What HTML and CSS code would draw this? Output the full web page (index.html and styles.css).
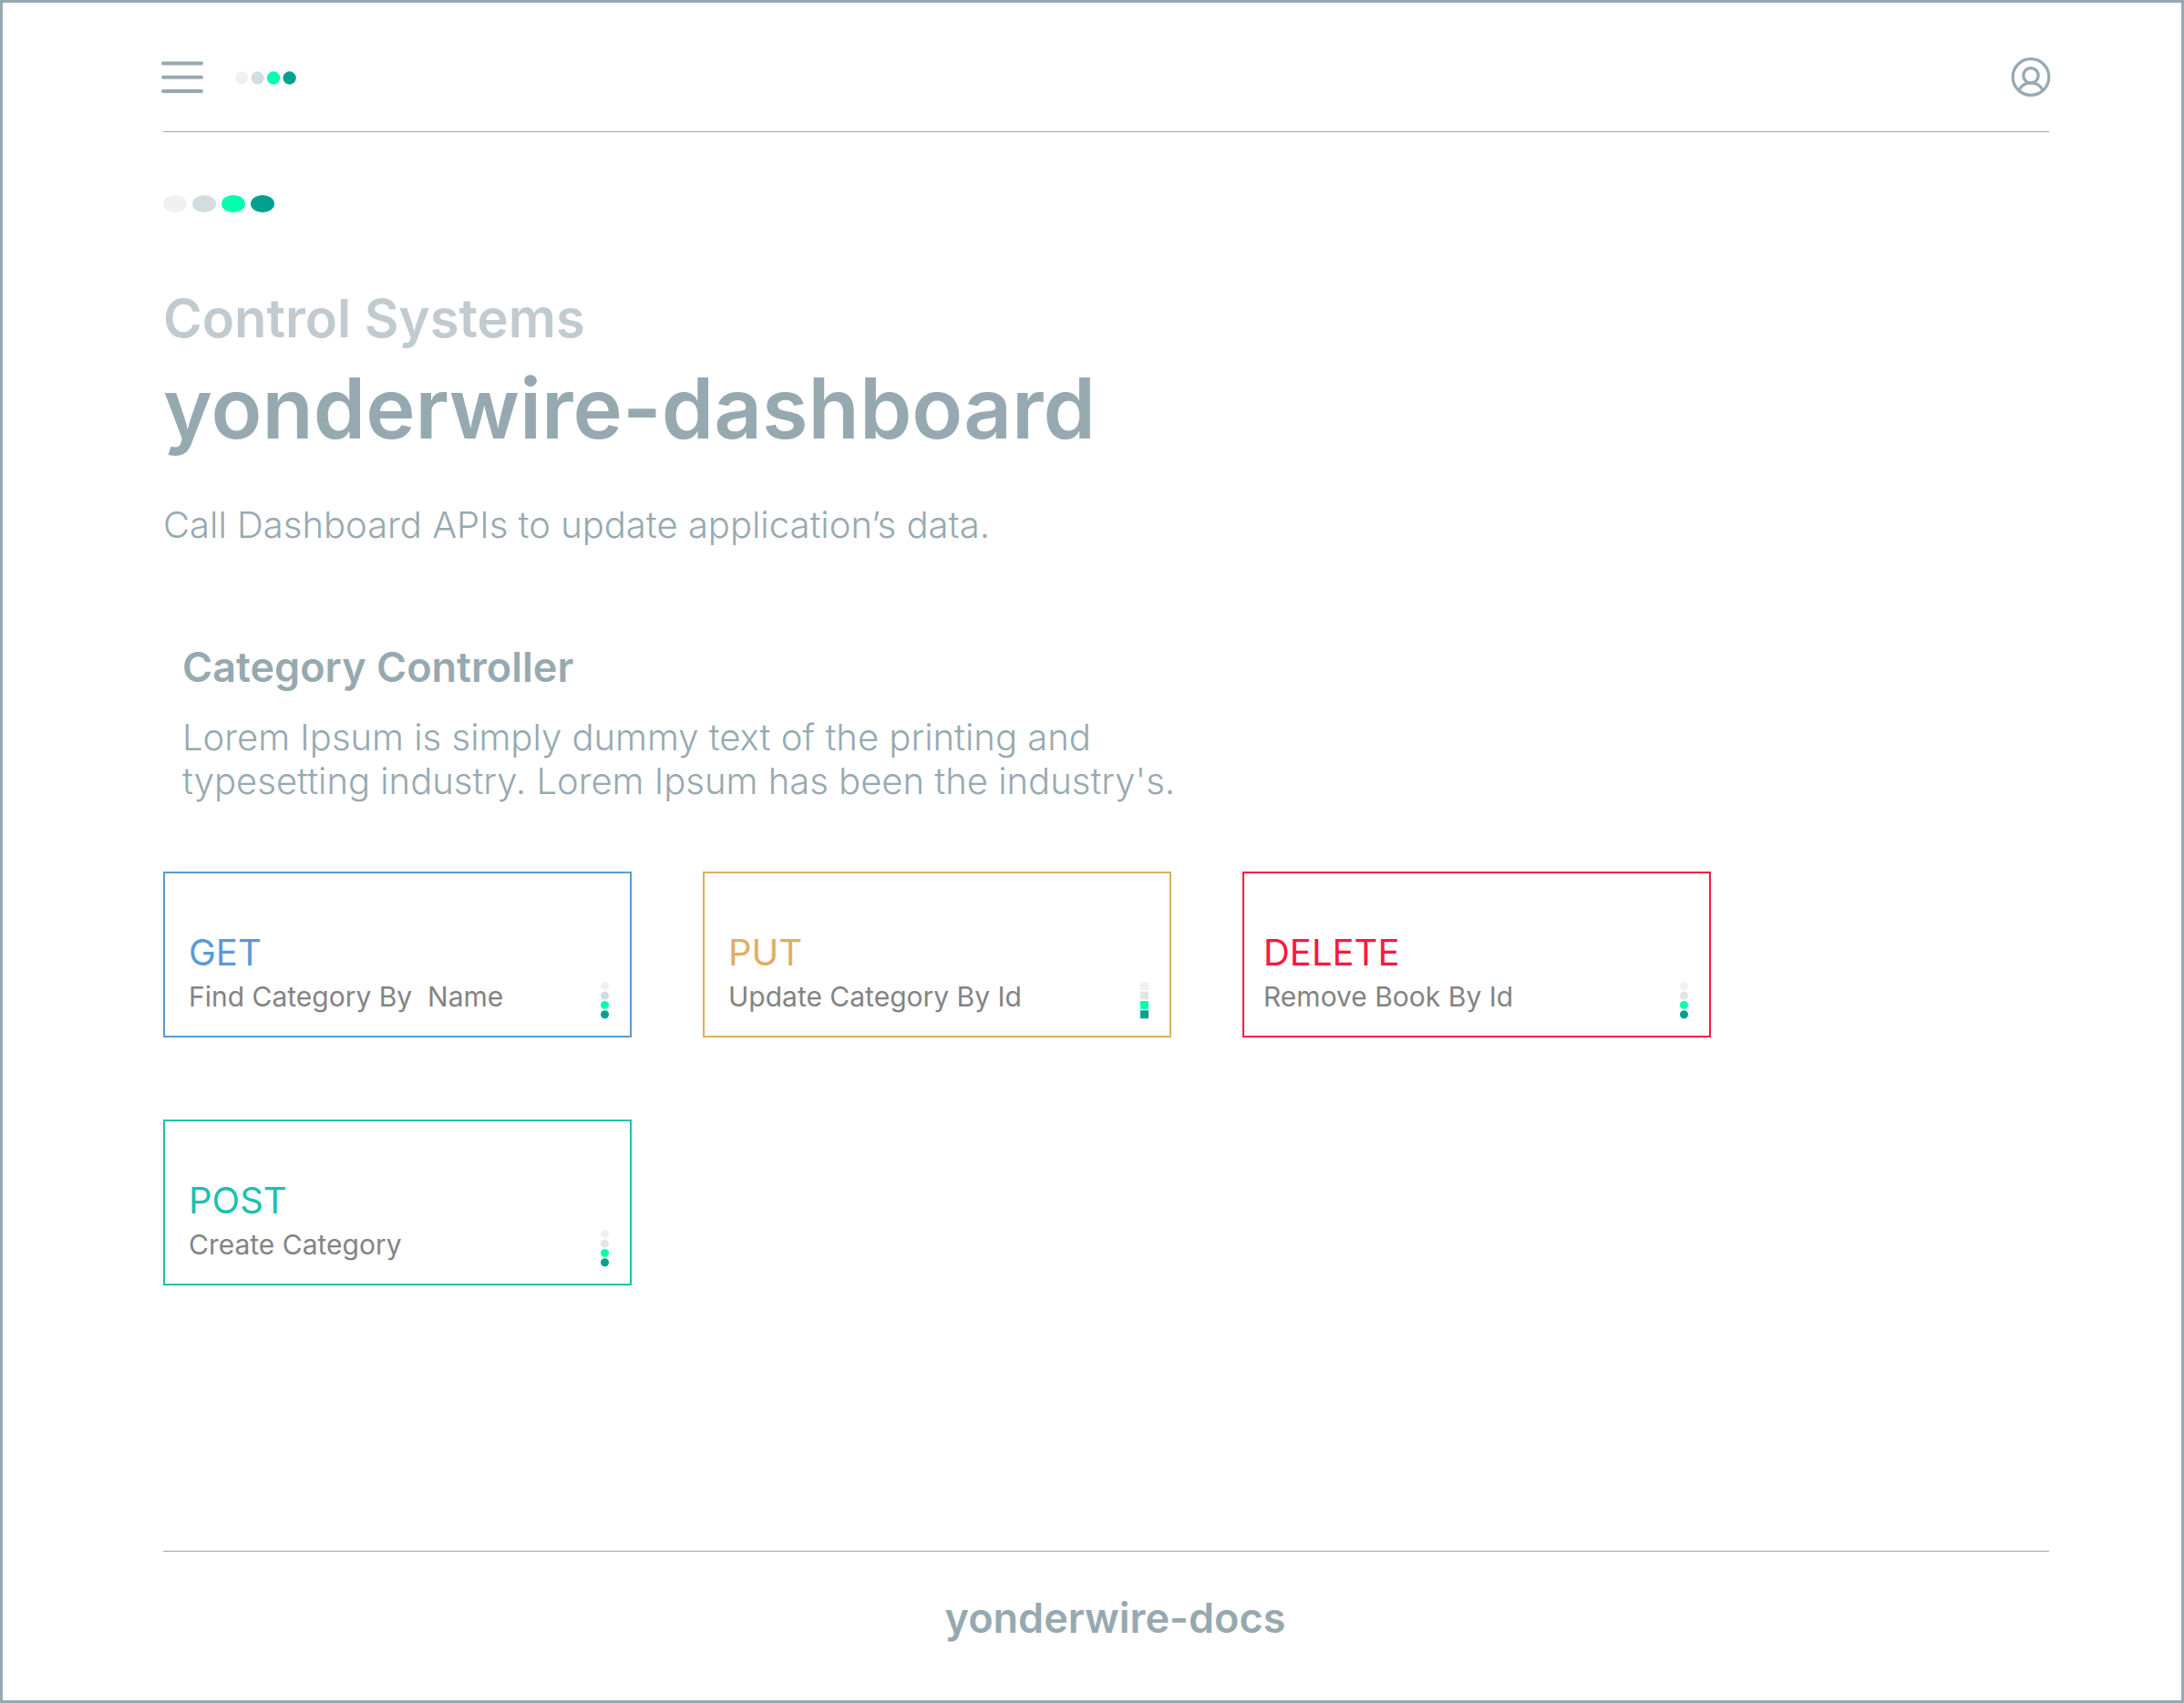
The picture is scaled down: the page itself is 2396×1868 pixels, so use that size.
FILE: index.html
```html
<!DOCTYPE html>
<html lang="en">
<head>
  <meta charset="utf-8">
  <meta name="viewport" content="width=device-width, initial-scale=1">
  <title>yonderwire-dashboard</title>
  <link rel="stylesheet" href="styles.css">
</head>
<body>
  <div class="page">
    <header class="topbar">
      <button class="icon-button" type="button" aria-label="Open menu">
        <svg width="46" height="36" viewBox="0 0 46 36" fill="none" stroke="currentColor" stroke-width="4" stroke-linecap="round" aria-hidden="true">
          <path d="M2 2.5H44M2 17.8H44M2 33H44"/>
        </svg>
      </button>
      <svg class="mark" width="67" height="15" viewBox="0 0 67 15" aria-hidden="true">
        <circle class="tone-1" cx="7.2" cy="7.5" r="7.2"/>
        <circle class="tone-2" cx="24.6" cy="7.5" r="7.2"/>
        <circle class="tone-3" cx="42.1" cy="7.5" r="7.2"/>
        <circle class="tone-4" cx="59.6" cy="7.5" r="7.2"/>
      </svg>
      <button class="icon-button account" type="button" aria-label="Account">
        <svg width="44" height="44" viewBox="0 0 44 44" fill="none" stroke="currentColor" stroke-width="3.2" aria-hidden="true">
          <circle cx="22" cy="21.5" r="19.8"/>
          <circle cx="22" cy="19.8" r="8.2"/>
          <path d="M8.8 35.9C11.5 31 16.2 27.9 22 27.9S32.5 31 35.2 35.9"/>
        </svg>
      </button>
    </header>

    <main class="content">
      <svg class="brand" width="122" height="19" viewBox="0 0 122 19" aria-hidden="true">
        <ellipse class="tone-1" cx="13" cy="9.5" rx="13" ry="9.5"/>
        <ellipse class="tone-2" cx="45" cy="9.5" rx="13" ry="9.5"/>
        <ellipse class="tone-3" cx="77" cy="9.5" rx="13" ry="9.5"/>
        <ellipse class="tone-4" cx="109" cy="9.5" rx="13" ry="9.5"/>
      </svg>
      <p class="eyebrow">Control Systems</p>
      <h1 class="title">yonderwire-dashboard</h1>
      <p class="lead">Call Dashboard APIs to update application’s data.</p>

      <section>
        <div class="section-intro">
          <h2 class="section-title">Category Controller</h2>
          <p class="lead">Lorem Ipsum is simply dummy text of the printing and typesetting industry. Lorem Ipsum has been the industry's.</p>
        </div>

        <div class="cards">
          <a class="card card-get" href="#get">
            <span class="card-text">
              <span class="method">GET</span>
              <span class="summary">Find Category By  Name</span>
            </span>
            <svg width="9" height="41" viewBox="0 0 9 41" aria-hidden="true">
              <circle class="tone-1" cx="4.5" cy="4.6" r="4.5"/>
              <circle class="tone-2" cx="4.5" cy="15" r="4.5"/>
              <circle class="tone-3" cx="4.5" cy="25.4" r="4.5"/>
              <circle class="tone-4" cx="4.5" cy="35.8" r="4.5"/>
            </svg>
          </a>
          <a class="card card-put" href="#put">
            <span class="card-text">
              <span class="method">PUT</span>
              <span class="summary">Update Category By Id</span>
            </span>
            <svg width="9" height="41" viewBox="0 0 9 41" aria-hidden="true">
              <rect class="tone-1" y="0.2" width="9" height="8.8"/>
              <rect class="tone-neutral" y="10.5" width="9" height="8.8"/>
              <rect class="tone-3" y="21" width="9" height="8.8"/>
              <rect class="tone-4" y="31.3" width="9" height="8.8"/>
            </svg>
          </a>
          <a class="card card-delete" href="#delete">
            <span class="card-text">
              <span class="method">DELETE</span>
              <span class="summary">Remove Book By Id</span>
            </span>
            <svg width="9" height="41" viewBox="0 0 9 41" aria-hidden="true">
              <circle class="tone-1" cx="4.5" cy="4.6" r="4.5"/>
              <circle class="tone-neutral" cx="4.5" cy="15" r="4.5"/>
              <circle class="tone-3" cx="4.5" cy="25.4" r="4.5"/>
              <circle class="tone-4" cx="4.5" cy="35.8" r="4.5"/>
            </svg>
          </a>
          <a class="card card-post" href="#post">
            <span class="card-text">
              <span class="method">POST</span>
              <span class="summary">Create Category</span>
            </span>
            <svg width="9" height="41" viewBox="0 0 9 41" aria-hidden="true">
              <circle class="tone-1" cx="4.5" cy="4.6" r="4.5"/>
              <circle class="tone-neutral" cx="4.5" cy="15" r="4.5"/>
              <circle class="tone-3" cx="4.5" cy="25.4" r="4.5"/>
              <circle class="tone-4" cx="4.5" cy="35.8" r="4.5"/>
            </svg>
          </a>
        </div>
      </section>
    </main>

    <footer class="footer">
      <a class="footer-link" href="#docs">yonderwire-docs</a>
    </footer>
  </div>
</body>
</html>
```
FILE: styles.css
```css
:root {
  --slate: #97a9b0;
  --slate-light: #c1cbcf;
}

* {
  box-sizing: border-box;
}

body,
h1,
h2,
p {
  margin: 0;
}

body {
  background: #fff;
  color: var(--slate);
  font-family: Inter, "Liberation Sans", sans-serif;
  font-variant-ligatures: none;
}

svg {
  display: block;
  flex: none;
}

.tone-1 { fill: #f0f0f0; }
.tone-2 { fill: #d2dde2; }
.tone-neutral { fill: #e4e4e4; }
.tone-3 { fill: #00ffae; }
.tone-4 { fill: #00a08f; }

.page {
  display: flex;
  flex-direction: column;
  min-height: 100vh;
  padding: 0 145px 0 176px;
  border: 3px solid var(--slate);
}

/* Top bar */
.topbar {
  display: flex;
  align-items: center;
  padding: 60px 0 37px;
  border-bottom: 1px solid var(--slate);
}

.icon-button {
  padding: 0;
  border: 0;
  background: none;
  color: inherit;
  cursor: pointer;
}

.topbar .icon-button:first-child {
  margin-left: -2px;
}

.mark {
  margin-left: 35px;
}

.account {
  margin: 0 -2px 0 auto;
}

/* Heading */
.content {
  padding-top: 69px;
}

.eyebrow {
  margin-top: 82px;
  color: var(--slate-light);
  font-size: 58px;
  font-weight: 600;
  line-height: 68px;
}

.title {
  margin-top: 11px;
  font-size: 92px;
  font-weight: 600;
  line-height: 108px;
}

.lead {
  font-size: 40px;
  font-weight: 300;
  line-height: 48px;
}

.title + .lead {
  margin-top: 50px;
}

.section-intro {
  max-width: 1140px;
  margin-top: 105px;
  padding-left: 21px;
}

.section-title {
  margin-bottom: 26px;
  font-size: 45px;
  font-weight: 600;
  line-height: 54px;
}

/* Endpoint cards */
.cards {
  display: grid;
  grid-template-columns: repeat(auto-fill, 514px);
  max-width: 1700px;
  gap: 90px 78px;
  margin: 75px 0;
}

.card {
  display: flex;
  align-items: flex-end;
  justify-content: space-between;
  padding: 63px 23px 18px 26px;
  border: 2px solid currentColor;
  text-decoration: none;
}

.card-text {
  display: flex;
  flex-direction: column;
  gap: 6px;
  padding-bottom: 7px;
}

.method {
  font-size: 40px;
  line-height: 48px;
}

.summary {
  color: #838383;
  font-size: 30px;
  line-height: 36px;
  white-space: pre;
}

.card-get { color: #5a9ad4; }
.card-put { color: #e0ae5f; }
.card-delete { color: #ff1643; padding-left: 21px; }
.card-post { color: #1bc1ae; }

/* Footer */
.footer {
  margin-top: auto;
  padding: 46px 0 63px 20px;
  border-top: 1px solid var(--slate);
  text-align: center;
}

.footer-link {
  display: inline-block;
  color: inherit;
  font-size: 45px;
  font-weight: 600;
  line-height: 54px;
  text-decoration: none;
}
```
